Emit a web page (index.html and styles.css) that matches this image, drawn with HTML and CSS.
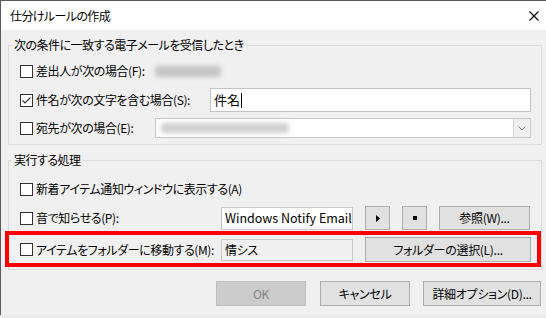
FILE: index.html
```html
<!DOCTYPE html>
<html lang="ja">
<head>
<meta charset="utf-8">
<title>仕分けルールの作成</title>
<link rel="stylesheet" href="styles.css">
</head>
<body>
<div class="window">
  <div class="titlebar">
    <span class="title">仕分けルールの作成</span>
    <svg class="close" width="10" height="10" viewBox="0 0 10 10"><path d="M0.5 0.5L9.5 9.5M9.5 0.5L0.5 9.5" stroke="#000" stroke-width="1.1" fill="none"/></svg>
  </div>
  <div class="content">
    <fieldset class="group g1">
      <legend>次の条件に一致する電子メールを受信したとき</legend>
      <div class="rows rows1">
        <div class="row r26">
          <span class="cb"></span><span class="lbl w119">差出人が次の場合(F):</span>
          <span class="blur b1"></span>
        </div>
        <div class="row r24">
          <span class="cb checked"><svg width="11" height="11" viewBox="0 0 11 11"><path d="M1.5 5.5L4 8L9.5 2.5" stroke="#333" stroke-width="1.1" fill="none"/></svg></span><span class="lbl w174">件名が次の文字を含む場合(S):</span>
          <span class="input subj">件名<span class="caret"></span></span>
        </div>
        <div class="row r24">
          <span class="cb"></span><span class="lbl w119">宛先が次の場合(E):</span>
          <span class="combo"><span class="blur b2"></span><span class="drop"><svg width="8" height="5" viewBox="0 0 8 5"><path d="M0.5 0.5L4 4L7.5 0.5" stroke="#888" stroke-width="1" fill="none"/></svg></span></span>
        </div>
      </div>
    </fieldset>
    <fieldset class="group g2">
      <legend>実行する処理</legend>
      <div class="rows rows2">
        <div class="row r24">
          <span class="cb"></span><span class="lbl">新着アイテム通知ウィンドウに表示する(A)</span>
        </div>
        <div class="row r24 gp">
          <span class="cb"></span><span class="lbl w185">音で知らせる(P):</span>
          <span class="input sound">Windows Notify Email</span>
          <span class="btn sq"><svg width="4" height="7" viewBox="0 0 4 7"><path d="M0 0L4 3.5L0 7Z" fill="#000"/></svg></span>
          <span class="btn sq"><span class="stop"></span></span>
          <span class="btn browse">参照(W)...</span>
        </div>
        <div class="row r25 gm">
          <span class="cb"></span><span class="lbl w185">アイテムをフォルダーに移動する(M):</span>
          <span class="input ro">情シス</span>
          <span class="btn folder">フォルダーの選択(L)...</span>
          <span class="highlight"></span>
        </div>
      </div>
    </fieldset>
    <div class="actions">
      <span class="btn act disabled">OK</span>
      <span class="btn act">キャンセル</span>
      <span class="btn act wide">詳細オプション(D)...</span>
    </div>
  </div>
</div>
</body>
</html>
```
FILE: styles.css
```css
html, body {
  margin: 0;
  padding: 0;
}
body {
  background: #e9e9e9;
  font-family: "Noto Sans CJK JP", "Noto Sans", sans-serif;
  font-size: 12px;
  line-height: 16px;
  color: #000;
  font-feature-settings: "palt";
}
.window {
  width: 546px;
  height: 315px;
  box-sizing: border-box;
  border-top: 1px solid #5a5a5a;
  border-left: 1px solid #5a5a5a;
  background: #f0f0f0;
  display: flex;
  flex-direction: column;
}
.titlebar {
  height: 29px;
  background: #fff;
  display: flex;
  align-items: center;
  padding-left: 9px;
}
.title {
  font-size: 12px;
  letter-spacing: -0.6px;
}
.close {
  margin-left: auto;
  margin-right: 7px;
}
.content {
  padding: 7px 4px 0 7px;
  display: flex;
  flex-direction: column;
}
.group {
  margin: 0;
  border: 1px solid #dcdcdc;
  padding: 0 3px;
  min-width: 0;
}
.group legend {
  padding: 0 2px;
  height: 16px;
  line-height: 16px;
  font-size: 12px;
  letter-spacing: -0.5px;
}
.g2 {
  margin-top: 7px;
}
.rows {
  display: flex;
  flex-direction: column;
  padding-left: 8px;
}
.rows1 {
  padding-top: 5px;
  padding-bottom: 4px;
  gap: 4px;
}
.rows2 {
  padding-top: 9px;
  padding-bottom: 7px;
}
.row {
  display: flex;
  align-items: center;
  position: relative;
}
.r24 { height: 24px; }
.r25 { height: 25px; }
.r26 { height: 26px; }
.gp { margin-top: 5px; }
.gm { margin-top: 7px; }
.cb {
  width: 13px;
  height: 13px;
  box-sizing: border-box;
  border: 1px solid #333;
  background: #fff;
  flex: none;
  display: flex;
  align-items: center;
  justify-content: center;
}
.lbl {
  margin-left: 3px;
  white-space: nowrap;
  flex: none;
  letter-spacing: -0.4px;
}
.w119 { width: 119px; }
.w174 { width: 174px; }
.w185 { width: 185px; }
.blur {
  display: block;
  background: #c4c4c4;
  filter: blur(2.5px);
  border-radius: 4px;
}
.b1 {
  width: 66px;
  height: 11px;
}
.input {
  box-sizing: border-box;
  background: #fff;
  border: 1px solid #b4b4b4;
  display: flex;
  align-items: center;
  padding-left: 4px;
  white-space: nowrap;
  overflow: hidden;
  flex: none;
}
.subj {
  width: 321px;
  height: 24px;
  padding-left: 3px;
  border-color: #c2c2c2;
  font-size: 13px;
}
.caret {
  display: inline-block;
  width: 1px;
  height: 15px;
  background: #000;
  margin-left: 1px;
}
.combo {
  width: 376px;
  height: 20px;
  box-sizing: border-box;
  background: #fff;
  border: 1px solid #c8c8c8;
  display: flex;
  align-items: center;
  padding-left: 5px;
}
.b2 {
  width: 128px;
  height: 10px;
  background: #cdcdcd;
}
.drop {
  margin-left: auto;
  width: 17px;
  height: 18px;
  box-sizing: border-box;
  border-left: 1px solid #d6d6d6;
  background: #f0f0f0;
  display: flex;
  align-items: center;
  justify-content: center;
}
.sound {
  width: 132px;
  height: 23px;
  font-size: 12.5px;
  padding-left: 3px;
  border-color: #c8c8c8;
}
.ro {
  width: 132px;
  height: 22px;
  background: #f0f0f0;
  border-color: #c8c8c8;
  padding-left: 3px;
  letter-spacing: -0.4px;
}
.btn {
  box-sizing: border-box;
  background: #e1e1e1;
  border: 1px solid #adadad;
  display: flex;
  align-items: center;
  justify-content: center;
  white-space: nowrap;
  flex: none;
  color: #000;
  letter-spacing: -0.3px;
}
.sq {
  width: 25px;
  height: 24px;
  margin-left: 12px;
}
.stop {
  width: 4px;
  height: 4px;
  background: #000;
}
.browse {
  width: 91px;
  height: 24px;
  margin-left: 12px;
}
.folder {
  width: 166px;
  height: 25px;
  margin-left: 12px;
}
.highlight {
  position: absolute;
  left: -15px;
  top: -6px;
  width: 536px;
  height: 36px;
  box-sizing: border-box;
  border: 4px solid #f00;
}
.actions {
  margin-top: 11px;
  display: flex;
  justify-content: flex-end;
  padding-right: 1px;
  gap: 14px;
}
.act {
  width: 90px;
  height: 25px;
}
.wide {
  width: 118px;
  margin-left: -1px;
}
.disabled {
  background: #cccccc;
  border-color: #bfbfbf;
  color: #838383;
}
```
